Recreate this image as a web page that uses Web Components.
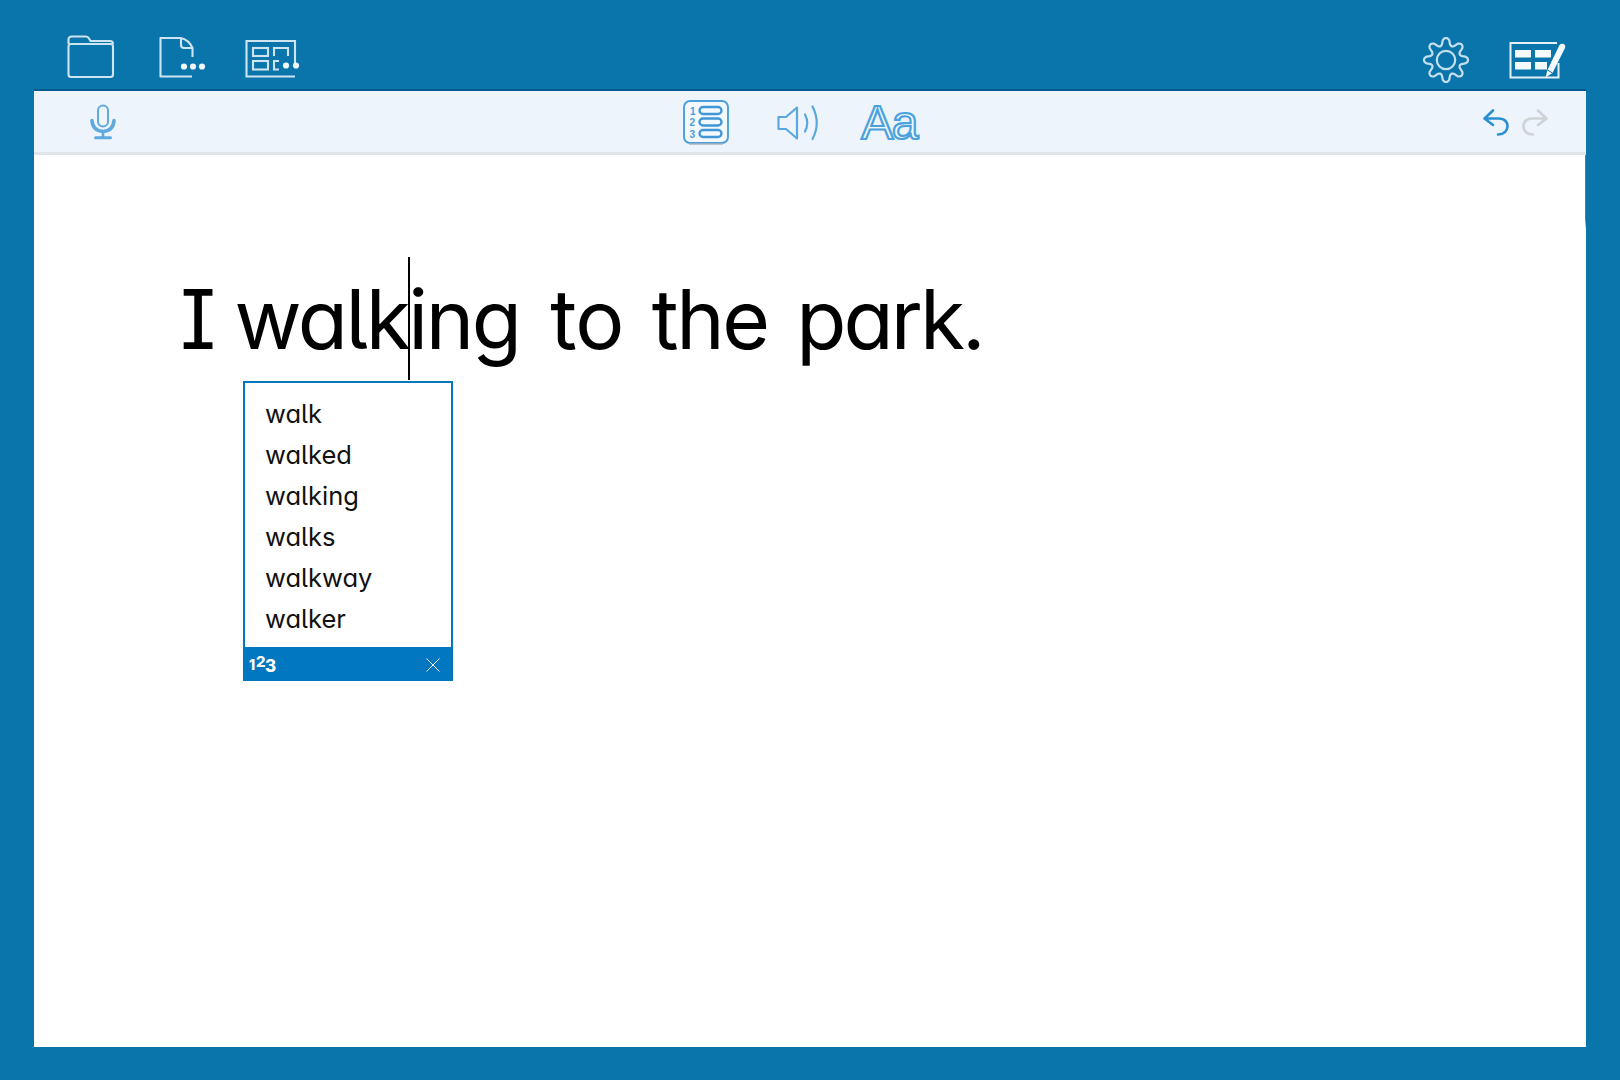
<!DOCTYPE html>
<html>
<head>
<meta charset="utf-8">
<title>Writer</title>
<style>
    html, body { margin: 0; height: 100%; background: #0a75ab; }
</style>
</head>
<body>
<writer-app>
    <top-bar slot="top">
        <app-icon slot="left" name="folder"></app-icon>
        <app-icon slot="left" name="doc"></app-icon>
        <app-icon slot="left" name="board"></app-icon>
        <app-icon slot="right" name="gear"></app-icon>
        <app-icon slot="right" name="table"></app-icon>
    </top-bar>
    <tool-bar slot="tools">
        <app-icon slot="left" name="mic"></app-icon>
        <app-icon slot="center" name="numlist"></app-icon>
        <app-icon slot="center" name="speaker"></app-icon>
        <font-button slot="center"></font-button>
        <app-icon slot="right" name="undo"></app-icon>
        <app-icon slot="right" name="redo"></app-icon>
    </tool-bar>
    <text-editor slot="editor">
        <word-popup>
            <word-row>walk</word-row>
            <word-row>walked</word-row>
            <word-row>walking</word-row>
            <word-row>walks</word-row>
            <word-row>walkway</word-row>
            <word-row>walker</word-row>
        </word-popup>
    </text-editor>
</writer-app>

<script>
const FONT = `"Inter", "Noto Sans", sans-serif`;
const FEAT = `"cv11" 1, "cv08" 1, "cv05" 1, "calt" 0`;

// gear outline, the teeth are a smoothed cosine around the ring
function gearPath(cx, cy, teeth) {
    let d = '';
    for (let i = 0; i < 160; i++) {
        const t = i / 160 * Math.PI * 2;
        const c = Math.cos(t * teeth);
        const s = Math.sign(c) * Math.pow(Math.abs(c), 0.6);
        const r = 18.4 + 3.6 * s;
        d += (i ? 'L' : 'M') + (cx + r * Math.sin(t)).toFixed(2) + ' ' + (cy - r * Math.cos(t)).toFixed(2);
    }
    return d + 'Z';
}

const ICONS = {
    folder: { w: 47, h: 43, svg: `
        <g fill="none" stroke="#cfe4f1" stroke-width="2.1" stroke-linejoin="round">
            <path d="M1.5 9V4.5Q1.5 1.5 5 1.5H19Q21 1.5 22 3.5L23.5 6H43Q46 6 46 9"/>
            <rect x="1.5" y="9" width="44.5" height="33" rx="2.5"/>
        </g>` },
    doc: { w: 46, h: 41, svg: `
        <g fill="none" stroke="#cfe4f1" stroke-width="2.1" stroke-linejoin="round">
            <path d="M22 1H1.5V39.5H33"/>
            <path d="M22 1V8Q22 11 25 11H33.5V20"/>
            <path d="M22 1Q30 3 33.5 11"/>
        </g>
        <g fill="#f0f7fb"><circle cx="25" cy="29.5" r="3.1"/><circle cx="34" cy="29.5" r="3.1"/><circle cx="43" cy="29.5" r="3.1"/></g>` },
    board: { w: 54, h: 38, svg: `
        <g fill="none" stroke="#cfe4f1" stroke-width="2.1">
            <path d="M50 26V1H1.5V36.5H50"/>
            <rect x="8" y="8" width="15" height="8"/>
            <rect x="8" y="21" width="15" height="8.5"/>
            <path d="M29 16V8H43V16"/>
            <path d="M34 21H29V29.5H34"/>
        </g>
        <g fill="#f0f7fb"><circle cx="41" cy="25.5" r="3.1"/><circle cx="51" cy="25.5" r="3.1"/></g>` },
    gear: { w: 46, h: 46, svg: `
        <g fill="none" stroke="#c6dfee" stroke-width="2.2" stroke-linejoin="round">
            <path d="${gearPath(23, 23, 8)}"/>
            <circle cx="23" cy="23" r="9.2"/>
        </g>` },
    table: { w: 56, h: 37, svg: `
        <path d="M48 1H1.5V35.5H49.5V21" fill="none" stroke="#e6f1f7" stroke-width="2"/>
        <g fill="#f4f9fc">
            <rect x="6" y="8" width="16" height="7.5"/><rect x="26" y="8" width="16" height="7.5"/>
            <rect x="6" y="20" width="16" height="7.5"/><rect x="26" y="20" width="12" height="7.5"/>
            <path d="M36.5 35.5 L38.5 28 L50.5 3 Q52 1 55 2 Q57 3.5 56 6 L43.5 31Z"/>
        </g>
        <path d="M38.5 28 L43.5 31" stroke="#0a75ab" stroke-width="1"/>` },
    mic: { w: 28, h: 36, svg: `
        <g fill="none" stroke="#5fa9dd" stroke-linecap="round">
            <rect x="9" y="1.5" width="10" height="21" rx="5" stroke-width="2"/>
            <path d="M3 16.5Q3.5 26.5 14 27.5Q24.5 26.5 25 16.5" stroke-width="3.6"/>
            <path d="M14 27.5V33" stroke-width="2.6"/>
            <path d="M6.5 33.8H21.5" stroke-width="3"/>
        </g>` },
    numlist: { w: 46, h: 45, svg: `
        <rect x="1" y="1" width="44" height="42" rx="6" fill="#f3f8fd" stroke="#4a9edb" stroke-width="1.9"/>
        <path d="M6 44H40" stroke="#a9b4bd" stroke-width="1.6"/>
        <g fill="none" stroke="#3f97d8" stroke-width="2.3">
            <rect x="16.5" y="7" width="22" height="7" rx="3.5"/>
            <rect x="16.5" y="18.5" width="22" height="7" rx="3.5"/>
            <rect x="16.5" y="30" width="22" height="7" rx="3.5"/>
        </g>
        <g fill="#4a9edb" font-family="Liberation Sans" font-weight="700" font-size="10">
            <text x="7" y="14.5">1</text><text x="6.5" y="26">2</text><text x="6.5" y="37.5">3</text>
        </g>` },
    speaker: { w: 43, h: 36, svg: `
        <g fill="none" stroke="#5ba8de" stroke-width="2.2" stroke-linejoin="round" stroke-linecap="round">
            <path d="M1.5 12V24H9L20 33.5V2.5L9 12Z"/>
            <path d="M28 9.5Q32.5 18 28 26.5"/>
            <path d="M35.5 1.5Q44 18 35.5 34"/>
        </g>` },
    undo: { w: 26, h: 27, svg: `
        <path d="M10 1.5L1.5 9.5L10 16M2 9.5H16Q24.5 10 24.5 17.5Q24 25 15 25.5" fill="none" stroke="#2a8fd3" stroke-width="2.6" stroke-linecap="round" stroke-linejoin="round"/>` },
    redo: { w: 26, h: 27, svg: `
        <path d="M16 1.5L24.5 9.5L16 16M24 9.5H10Q1.5 10 1.5 17.5Q2 25 11 25.5" fill="none" stroke="#cfd3d6" stroke-width="2.6" stroke-linecap="round" stroke-linejoin="round"/>` }
};

class AppIcon extends HTMLElement {
    constructor() {
        super();
        this.attachShadow({mode: "open"});
    }
    connectedCallback() {
        const icon = ICONS[this.getAttribute('name')];
        this.shadowRoot.innerHTML = `
            <style>
                :host { display: block; line-height: 0; }
                svg { display: block; overflow: visible; }
            </style>
            <svg width="${icon.w}" height="${icon.h}" viewBox="0 0 ${icon.w} ${icon.h}">${icon.svg}</svg>
        `;
    }
}

class FontButton extends HTMLElement {
    constructor() {
        super();
        this.attachShadow({mode: "open"});
        this.shadowRoot.innerHTML = `
            <style>
                :host { display: block; }
                .aa {
                    font: 400 48px/44px "Liberation Sans", sans-serif;
                    color: #f3f8fd;
                    -webkit-text-stroke: 2.2px #4aa2dd;
                    letter-spacing: -1.5px;
                }
            </style>
            <span class="aa">Aa</span>
        `;
    }
}

class TopBar extends HTMLElement {
    constructor() {
        super();
        this.attachShadow({mode: "open"});
        this.shadowRoot.innerHTML = `
            <style>
                :host { display: flex; justify-content: space-between; height: 89px; box-sizing: border-box; padding: 37px 55px 0 67px; }
                .side { display: flex; }
                .left { align-items: flex-end; height: 41px; gap: 40px; }
                .right { align-items: center; height: 46px; gap: 42px; }
                ::slotted([name="doc"]) { margin-left: 5px; }
                ::slotted([name="gear"]) { margin-right: -2px; }
            </style>
            <div class="side left"><slot name="left"></slot></div>
            <div class="side right"><slot name="right"></slot></div>
        `;
    }
}

class ToolBar extends HTMLElement {
    constructor() {
        super();
        this.attachShadow({mode: "open"});
        this.shadowRoot.innerHTML = `
            <style>
                :host {
                    display: grid;
                    grid-template-columns: 1fr auto 1fr;
                    align-items: center;
                    height: 66px;
                    box-sizing: border-box;
                    background: #edf4fb;
                    border-top: 2px solid #00598f;
                    border-bottom: 3px solid #dfe5ea;
                    padding: 2px 38px 0 55px;
                }
                .center, .right { display: flex; align-items: center; }
                .center { gap: 48px; margin-right: 37px; }
                .right { justify-content: flex-end; gap: 13px; }
                ::slotted(font-button) { margin-left: -7px; }
                ::slotted([name="mic"]) { margin-top: -2px; }
            </style>
            <div><slot name="left"></slot></div>
            <div class="center"><slot name="center"></slot></div>
            <div class="right"><slot name="right"></slot></div>
        `;
    }
}

class TextEditor extends HTMLElement {
    constructor() {
        super();
        this.attachShadow({mode: "open"});
        this.shadowRoot.innerHTML = `
            <style>
                :host { display: block; flex: 1; position: relative; background: #fff; padding: 110px 0 0 146px; }
                /* dark smear on the right edge of the page */
                :host::after {
                    content: "";
                    position: absolute;
                    right: 0;
                    top: 0;
                    width: 1px;
                    height: 75px;
                    background: linear-gradient(#6d7680 85%, rgba(109, 118, 128, 0));
                }
                .line {
                    font: 400 82px/110px ${FONT};
                    font-feature-settings: ${FEAT};
                    letter-spacing: -2.4px;
                    word-spacing: 8px;
                    color: #000;
                    white-space: nowrap;
                }
                .first { word-spacing: 0; }
                .to { letter-spacing: -1.2px; margin-left: 2px; }
                .park { letter-spacing: -3px; }
                .caret { position: relative; display: inline-block; width: 0; height: 0; }
                .caret::after {
                    content: "";
                    position: absolute;
                    left: 0;
                    top: -92px;
                    width: 2px;
                    height: 123px;
                    background: #000;
                }
            </style>
            <div class="line"><span class="first">I </span>walk<span class="caret"></span>ing <span class="to">to</span> the <span class="park">park.</span></div>
            <slot></slot>
        `;
    }
}

class WordPopup extends HTMLElement {
    constructor() {
        super();
        this.attachShadow({mode: "open"});
        this.shadowRoot.innerHTML = `
            <style>
                :host {
                    position: absolute;
                    left: 209px;
                    top: 226px;
                    width: 210px;
                    height: 300px;
                    box-sizing: border-box;
                    border: 2px solid #0077c0;
                    background: #fff;
                    display: flex;
                    flex-direction: column;
                }
                .list { flex: 1; padding: 10px 0 0 20px; }
                .foot {
                    margin: 0 -2px -2px;
                    height: 34px;
                    background: #0077c0;
                    display: flex;
                    align-items: center;
                    justify-content: space-between;
                    padding: 1px 12px 0 6px;
                    box-sizing: border-box;
                    color: #fff;
                    font: 800 17px/1 ${FONT};
                }
                .nums { display: flex; gap: 0; }
                .nums span:nth-child(1) { position: relative; top: 2px; font-size: 14px; width: 7px; }
                .nums span:nth-child(2) { position: relative; top: -2px; font-size: 15px; width: 9px; }
                .nums span:nth-child(3) { position: relative; top: 2px; }
            </style>
            <div class="list"><slot></slot></div>
            <div class="foot">
                <div class="nums"><span>1</span><span>2</span><span>3</span></div>
                <svg width="16" height="16" viewBox="0 0 16 16"><path d="M1.5 1.5L14.5 14.5M14.5 1.5L1.5 14.5" stroke="#fff" stroke-width="1" fill="none"/></svg>
            </div>
        `;
    }
}

class WordRow extends HTMLElement {
    constructor() {
        super();
        this.attachShadow({mode: "open"});
        this.shadowRoot.innerHTML = `
            <style>
                :host {
                    display: block;
                    font: 400 25.5px/41px ${FONT};
                    font-feature-settings: ${FEAT};
                    color: #111;
                }
            </style>
            <slot></slot>
        `;
    }
}

class WriterApp extends HTMLElement {
    constructor() {
        super();
        this.attachShadow({mode: "open"});
        this.shadowRoot.innerHTML = `
            <style>
                :host { display: flex; flex-direction: column; height: 1080px; box-sizing: border-box; background: #0a75ab; }
                .page { flex: 1; display: flex; flex-direction: column; margin: 0 34px 33px; }
            </style>
            <slot name="top"></slot>
            <div class="page">
                <slot name="tools"></slot>
                <slot name="editor"></slot>
            </div>
        `;
    }
}

customElements.define('app-icon', AppIcon);
customElements.define('font-button', FontButton);
customElements.define('top-bar', TopBar);
customElements.define('tool-bar', ToolBar);
customElements.define('text-editor', TextEditor);
customElements.define('word-popup', WordPopup);
customElements.define('word-row', WordRow);
customElements.define('writer-app', WriterApp);
</script>
</body>
</html>
